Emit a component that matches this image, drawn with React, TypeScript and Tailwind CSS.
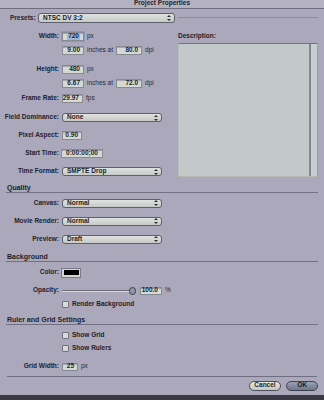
import type { ReactNode } from "react";

// ─── small building blocks ───────────────────────────────────────────────────
const Label = ({ children }: { children: ReactNode }) => (
  <div className="w-[59px] shrink-0 text-right font-bold text-[6.5px] leading-none text-[#22222c]">
    {children}
  </div>
);

const Unit = ({ children }: { children: ReactNode }) => (
  <span className="text-[6.5px] leading-none text-[#2a2a34]">{children}</span>
);

interface FieldProps {
  value: string;
  width: string;
  focus?: boolean;
  center?: boolean;
}

const Field = ({ value, width, focus, center }: FieldProps) => (
  <div
    className={`${width} h-full shrink-0 flex items-center bg-[#d5d9d4] border border-[#878a93] shadow-[inset_0_1px_0_#a4a6ac] font-bold text-[6.5px] leading-none text-[#1e1e26] ${center ? "justify-center" : "justify-end pr-[3px]"} ${focus ? "outline outline-[1.5px] outline-[#7d9ccf]" : ""}`}
  >
    {focus ? <span className="bg-[#9db5dc] px-[1px]">{value}</span> : value}
  </div>
);

const Arrows = () => (
  <svg width="4" height="6" viewBox="0 0 4 6" className="shrink-0">
    <path d="M2 0 L4 2 L0 2 Z" fill="#2c2e38" />
    <path d="M2 6 L4 4 L0 4 Z" fill="#2c2e38" />
  </svg>
);

const Select = ({ value, width }: { value: string; width: string }) => (
  <div
    className={`${width} h-full shrink-0 flex items-center justify-between pl-[4px] pr-[3px] rounded-[3px] border border-[#5d606d] bg-gradient-to-b from-[#dfe2de] to-[#c6c9c5] font-bold text-[6.5px] leading-none text-[#1e1e26]`}
  >
    <span>{value}</span>
    <Arrows />
  </div>
);

const Check = ({ label }: { label: string }) => (
  <div className="flex items-center h-full pl-[62px] gap-[3px]">
    <div className="w-[7px] h-[7px] bg-[#d8dbd7] border border-[#6f727c] rounded-[1px]" />
    <span className="font-bold text-[6.5px] leading-none text-[#22222c]">{label}</span>
  </div>
);

const Header = ({ title, className }: { title: string; className: string }) => (
  <div className={`${className} mx-[6px] h-[10px] flex items-center pl-[1px] border-b border-[#727183] font-bold text-[7px] leading-none text-[#1e1e28]`}>
    {title}
  </div>
);

export default function App() {
  return (
    <div className="w-[324px] h-[400px] flex flex-col bg-[#aba8bb] font-['Liberation_Sans',Arial,sans-serif] overflow-hidden">
      {/* title bar */}
      <div className="h-[9px] shrink-0 flex items-start justify-center bg-[#b4b2c2] border-b border-[#6e6d7e] font-bold text-[6.5px] leading-[6px] text-[#24242e]">
        Project Properties
      </div>

      {/* presets */}
      <div className="mt-[4px] h-[10px] flex items-center shrink-0">
        <div className="w-[38px] pl-[10px] font-bold text-[6.5px] leading-none text-[#22222c]">Presets:</div>
        <Select value="NTSC DV 3:2" width="w-[137px]" />
        <div className="flex-1 ml-[3px] mr-[6px] h-px bg-[#8d8b9d] mb-[2px]" />
      </div>

      {/* format + description */}
      <div className="mt-[9px] flex shrink-0">
        <div className="w-[178px] flex flex-col">
          <div className="h-[9px] flex items-center gap-[3px]">
            <Label>Width:</Label>
            <Field value="720" width="w-[22px]" focus />
            <Unit>px</Unit>
          </div>
          <div className="mt-[5px] h-[9px] flex items-center gap-[3px] pl-[62px]">
            <Field value="9.00" width="w-[22px]" />
            <Unit>inches at</Unit>
            <Field value="80.0" width="w-[26px]" />
            <Unit>dpi</Unit>
          </div>
          <div className="mt-[10px] h-[9px] flex items-center gap-[3px]">
            <Label>Height:</Label>
            <Field value="480" width="w-[22px]" />
            <Unit>px</Unit>
          </div>
          <div className="mt-[5px] h-[9px] flex items-center gap-[3px] pl-[62px]">
            <Field value="6.67" width="w-[22px]" />
            <Unit>inches at</Unit>
            <Field value="72.0" width="w-[26px]" />
            <Unit>dpi</Unit>
          </div>
          <div className="mt-[6px] h-[9px] flex items-center gap-[3px]">
            <Label>Frame Rate:</Label>
            <Field value="29.97" width="w-[21px]" />
            <Unit>fps</Unit>
          </div>
          <div className="mt-[10px] h-[9px] flex items-center gap-[3px]">
            <Label>Field Dominance:</Label>
            <Select value="None" width="w-[100px]" />
          </div>
          <div className="mt-[9px] h-[9px] flex items-center gap-[3px]">
            <Label>Pixel Aspect:</Label>
            <Field value="0.90" width="w-[20px]" />
          </div>
          <div className="mt-[9px] h-[9px] flex items-center gap-[2px]">
            <Label>Start Time:</Label>
            <Field value="0:00:00;00" width="w-[42px]" center />
          </div>
          <div className="mt-[9px] h-[9px] flex items-center gap-[3px]">
            <Label>Time Format:</Label>
            <Select value="SMPTE Drop" width="w-[100px]" />
          </div>
        </div>

        <div className="flex-1 mr-[6px] flex flex-col">
          <div className="mt-[1px] font-bold text-[6.5px] leading-none text-[#22222c]">Description:</div>
          <div className="mt-[3px] h-[134px] flex bg-[#c3c9c9] border-t border-t-[#6f7380] border-l border-l-[#b9bdbd] border-b border-b-[#b6b9ad] border-r border-r-[#9aa0a6]">
            <div className="flex-1" />
            <div className="w-[8px] border-l-2 border-l-[#7f8796] bg-[#c8cdcd]" />
          </div>
        </div>
      </div>

      {/* quality */}
      <Header title="Quality" className="mt-[6px]" />
      <div className="mt-[6px] h-[9px] flex items-center gap-[3px] shrink-0">
        <Label>Canvas:</Label>
        <Select value="Normal" width="w-[100px]" />
      </div>
      <div className="mt-[9px] h-[9px] flex items-center gap-[3px] shrink-0">
        <Label>Movie Render:</Label>
        <Select value="Normal" width="w-[100px]" />
      </div>
      <div className="mt-[9px] h-[9px] flex items-center gap-[3px] shrink-0">
        <Label>Preview:</Label>
        <Select value="Draft" width="w-[100px]" />
      </div>

      {/* background */}
      <Header title="Background" className="mt-[8px]" />
      <div className="mt-[6px] h-[10px] flex items-center gap-[2px] shrink-0">
        <Label>Color:</Label>
        <div className="w-[20px] h-full p-[1.5px] bg-[#d4d6d3] border border-[#777a84]">
          <div className="w-full h-full bg-black" />
        </div>
      </div>
      <div className="mt-[9px] h-[8px] flex items-center gap-[3px] shrink-0">
        <Label>Opacity:</Label>
        <div className="relative w-[75px] h-full flex items-center">
          <div className="w-[70px] h-[2px] bg-[#d8dad6] border-t border-[#6c6e78]" />
          <div className="absolute left-[67px] top-0 w-[7px] h-[8px] rounded-full bg-[#8f96a4] border border-[#3c404c]" />
        </div>
        <Field value="100.0" width="w-[22px]" />
        <Unit>%</Unit>
      </div>
      <div className="mt-[6px] h-[8px] shrink-0">
        <Check label="Render Background" />
      </div>

      {/* ruler and grid */}
      <Header title="Ruler and Grid Settings" className="mt-[6px]" />
      <div className="mt-[7px] h-[8px] shrink-0">
        <Check label="Show Grid" />
      </div>
      <div className="mt-[5px] h-[8px] shrink-0">
        <Check label="Show Rulers" />
      </div>
      <div className="mt-[10px] h-[8px] flex items-center gap-[3px] shrink-0">
        <Label>Grid Width:</Label>
        <Field value="25" width="w-[16px]" />
        <Unit>px</Unit>
      </div>
      <div className="mt-[5px] mx-[7px] h-px bg-[#6f6e80] shrink-0" />

      {/* buttons */}
      <div className="mt-[4px] h-[10px] flex justify-end gap-[5px] pr-[6px] shrink-0">
        <button
          type="button"
          className="w-[32px] h-full rounded-full border border-[#4d505c] bg-gradient-to-b from-[#e6e8e4] to-[#c3c6c2] font-bold text-[6.5px] leading-none text-[#1e1e26]"
        >
          Cancel
        </button>
        <button
          type="button"
          className="w-[32px] h-full rounded-full border border-[#3c4250] bg-gradient-to-b from-[#9aa3b4] to-[#6c7689] font-bold text-[6.5px] leading-none text-[#14161e]"
        >
          OK
        </button>
      </div>

      <div className="mt-auto h-[5px] bg-[#3a3a44] shrink-0" />
    </div>
  );
}
